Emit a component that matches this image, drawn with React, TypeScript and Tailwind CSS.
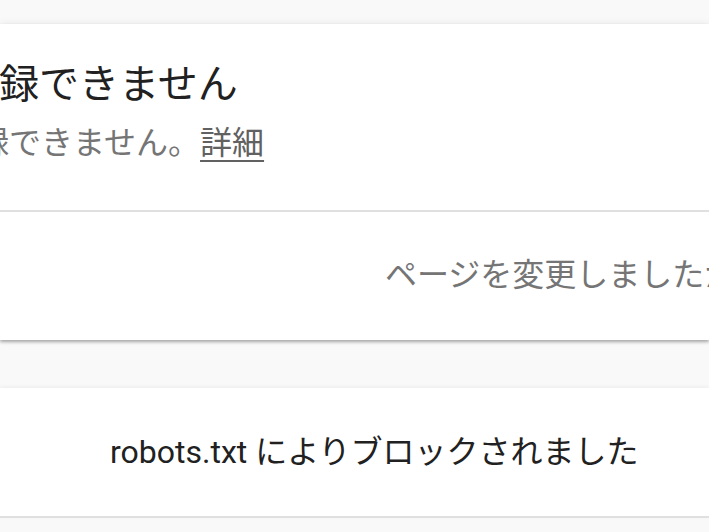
export default function App() {
  const font = { fontFamily: 'Roboto, "Noto Sans CJK JP", sans-serif' };
  return (
    <div
      className="h-[532px] w-[709px] overflow-hidden bg-[#f9f9f9] font-['Roboto','Noto_Sans_CJK_JP',sans-serif]"
      style={font}
    >
      <div className="pt-6">
        <div className="bg-white shadow-[0_2px_3px_rgba(0,0,0,0.3),0_0_8px_rgba(0,0,0,0.08)]">
          <div className="h-[186px] pt-[37px]">
            <div className="ml-[-41px] whitespace-nowrap text-[40px] leading-[48px] text-[#212121]">
              登録できません
            </div>
            <div className="ml-[-55px] mt-[14px] whitespace-nowrap text-[32px] leading-[40px] text-[#757575]">
              登録できません。
              <span className="text-[#616161] underline decoration-2 underline-offset-[6px]">詳細</span>
            </div>
          </div>
          <div className="h-[2px] bg-[#e0e0e0]" />
          <div className="h-[128px] pt-[43px]">
            <div className="pl-[385px] whitespace-nowrap text-[32px] leading-[40px] text-[#757575]">
              ページを変更しましたか？
            </div>
          </div>
        </div>
      </div>
      <div className="mt-[48px] border-b-2 border-[#e0e0e0] bg-white shadow-[0_-1px_4px_rgba(0,0,0,0.06)]">
        <div className="flex h-[128px] items-center pl-[110px]">
          <span className="whitespace-nowrap text-[32px] leading-[40px] text-[#212121]">
            robots.txt によりブロックされました
          </span>
        </div>
      </div>
    </div>
  );
}
